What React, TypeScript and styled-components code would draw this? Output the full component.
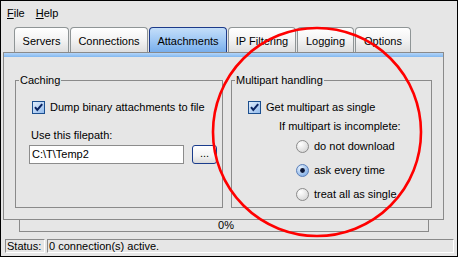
import styled, { createGlobalStyle } from "styled-components";

const GlobalStyle = createGlobalStyle`
  html, body {
    margin: 0;
    padding: 0;
    background: #e6e6e6;
  }
  body {
    font-family: "Liberation Sans", Arial, sans-serif;
    font-size: 11px;
    color: #000;
  }
`;

const Window = styled.div`
  position: relative;
  width: 458px;
  height: 257px;
  box-sizing: border-box;
  border: 1px solid #000;
  background: #e6e6e6;
  display: flex;
  flex-direction: column;
  overflow: hidden;
`;

const MenuBar = styled.div`
  height: 26px;
  display: flex;
  gap: 11px;
  padding: 6px 0 0 6px;
  box-sizing: border-box;
  line-height: 13px;
`;

const MenuItem = styled.span`
  u {
    text-decoration: underline;
  }
`;

const TabRow = styled.div`
  height: 25px;
  display: flex;
  gap: 1px;
  padding-left: 13px;
  align-items: stretch;
`;

const Tab = styled.div<{ $w: number; $active?: boolean }>`
  width: ${(p) => p.$w}px;
  box-sizing: border-box;
  border: 1px solid ${(p) => (p.$active ? "#1d3b8a" : "#8f9596")};
  border-bottom: none;
  border-radius: 4px 4px 0 0;
  background: ${(p) =>
    p.$active
      ? "linear-gradient(#c4def9, #9cc6f4 55%, #78aeec)"
      : "linear-gradient(#ffffff, #f3f3f3 50%, #dedede)"};
  display: flex;
  align-items: center;
  justify-content: center;
  padding-top: 3px;
  line-height: 13px;
  white-space: nowrap;
`;

const Panel = styled.div`
  width: 441px;
  height: 168px;
  margin-left: 2px;
  box-sizing: border-box;
  border: 1px solid #8a8a8a;
  background: linear-gradient(#b4d6fa, #82b8ef) top / 100% 4px no-repeat,
    #e6e6e6;
  display: flex;
  gap: 8px;
  padding: 21px 0 0 11px;
`;

const Group = styled.fieldset<{ $w: number }>`
  width: ${(p) => p.$w}px;
  height: 134px;
  box-sizing: border-box;
  margin: 0;
  padding: 0 0 0 16px;
  border: 1px solid #8a8a8a;
  display: flex;
  flex-direction: column;
  align-items: flex-start;
`;

const Caption = styled.legend`
  margin-left: -13px;
  padding: 0 1px;
  line-height: 13px;
`;

const CheckRow = styled.label`
  display: flex;
  align-items: center;
  gap: 5px;
  height: 13px;
  line-height: 13px;
  margin-top: 14px;
  white-space: nowrap;
`;

const Text = styled.div<{ $indent?: number; $top: number }>`
  line-height: 13px;
  margin-top: ${(p) => p.$top}px;
  margin-left: ${(p) => p.$indent ?? 0}px;
  white-space: nowrap;
`;

const PathRow = styled.div`
  display: flex;
  gap: 8px;
  margin-top: 3px;
  margin-left: -3px;
`;

const PathInput = styled.div`
  width: 155px;
  height: 19px;
  box-sizing: border-box;
  border: 1px solid #8c8c8c;
  background: #fff;
  padding-left: 2px;
  line-height: 17px;
`;

const DotsButton = styled.div`
  width: 25px;
  height: 19px;
  box-sizing: border-box;
  border: 1px solid #1a3c8c;
  border-radius: 3px;
  background: linear-gradient(#ffffff, #f2f2f2 60%, #d9d9d9);
  text-align: center;
  line-height: 15px;
  font-size: 11px;
`;

const RadioList = styled.div`
  display: flex;
  flex-direction: column;
  gap: 11px;
  margin-top: 7px;
  margin-left: 48px;
`;

const RadioRow = styled.label`
  display: flex;
  align-items: center;
  gap: 5px;
  height: 13px;
  line-height: 13px;
  white-space: nowrap;
`;

const Progress = styled.div`
  width: 410px;
  height: 12px;
  margin-left: 18px;
  box-sizing: border-box;
  border: 1px solid #8a8a8a;
  border-top: none;
  text-align: center;
  line-height: 11px;
  padding-left: 4px;
`;

const StatusBar = styled.div`
  display: flex;
  gap: 2px;
  margin: 7px 0 0 4px;
  height: 14px;
`;

const StatusCell = styled.div<{ $w: number }>`
  width: ${(p) => p.$w}px;
  box-sizing: border-box;
  border: 1px solid;
  border-color: #8a8a8a #ffffff #ffffff #8a8a8a;
  padding-left: 1px;
  line-height: 12px;
  white-space: nowrap;
`;

const Annotation = styled.svg`
  position: absolute;
  left: 0;
  top: 0;
  pointer-events: none;
`;

const CheckBox = () => (
  <svg width="13" height="13" viewBox="0 0 13 13">
    <defs>
      <linearGradient id="cbg" x1="0" y1="0" x2="1" y2="1">
        <stop offset="0" stopColor="#e4effc" />
        <stop offset="1" stopColor="#8fb9ec" />
      </linearGradient>
    </defs>
    <rect x="0.5" y="0.5" width="12" height="12" fill="url(#cbg)" stroke="#1c4f8f" />
    <path d="M3 6.2 L5.3 9 L10.2 3.2" fill="none" stroke="#0b2462" strokeWidth="2" />
  </svg>
);

const Radio = ({ checked }: { checked?: boolean }) => (
  <svg width="13" height="13" viewBox="0 0 13 13">
    <defs>
      <radialGradient id="rg0" cx="0.35" cy="0.3" r="0.8">
        <stop offset="0" stopColor="#ffffff" />
        <stop offset="1" stopColor="#d4d4d4" />
      </radialGradient>
      <radialGradient id="rg1" cx="0.35" cy="0.3" r="0.8">
        <stop offset="0" stopColor="#e8f2fd" />
        <stop offset="1" stopColor="#78a8e4" />
      </radialGradient>
    </defs>
    <circle
      cx="6.5"
      cy="6.5"
      r="6"
      fill={checked ? "url(#rg1)" : "url(#rg0)"}
      stroke={checked ? "#5c7fb8" : "#8a8a8a"}
    />
    {checked && <circle cx="6.5" cy="6.5" r="2.4" fill="#0b1636" />}
  </svg>
);

const tabs = [
  { label: "Servers", w: 55 },
  { label: "Connections", w: 78 },
  { label: "Attachments", w: 78, active: true },
  { label: "IP Filtering", w: 68 },
  { label: "Logging", w: 57 },
  { label: "Options", w: 56 },
];

const App = () => {
  return (
    <>
      <GlobalStyle />
      <Window>
        <MenuBar>
          <MenuItem>
            <u>F</u>ile
          </MenuItem>
          <MenuItem>
            <u>H</u>elp
          </MenuItem>
        </MenuBar>
        <TabRow>
          {tabs.map((t) => (
            <Tab key={t.label} $w={t.w} $active={t.active}>
              {t.label}
            </Tab>
          ))}
        </TabRow>
        <Panel>
          <Group $w={208}>
            <Caption>Caching</Caption>
            <CheckRow>
              <CheckBox />
              Dump binary attachments to file
            </CheckRow>
            <Text $top={15} $indent={-1}>
              Use this filepath:
            </Text>
            <PathRow>
              <PathInput>C:\T\Temp2</PathInput>
              <DotsButton>...</DotsButton>
            </PathRow>
          </Group>
          <Group $w={201}>
            <Caption>Multipart handling</Caption>
            <CheckRow>
              <CheckBox />
              Get multipart as single
            </CheckRow>
            <Text $top={6} $indent={31}>
              If multipart is incomplete:
            </Text>
            <RadioList>
              <RadioRow>
                <Radio />
                do not download
              </RadioRow>
              <RadioRow>
                <Radio checked />
                ask every time
              </RadioRow>
              <RadioRow>
                <Radio />
                treat all as single
              </RadioRow>
            </RadioList>
          </Group>
        </Panel>
        <Progress>0%</Progress>
        <StatusBar>
          <StatusCell $w={40}>Status:</StatusCell>
          <StatusCell $w={407}>0 connection(s) active.</StatusCell>
        </StatusBar>
        <Annotation width="458" height="257" viewBox="0 0 458 257">
          <circle cx="316" cy="131" r="104" fill="none" stroke="#ff0000" strokeWidth="2.6" />
        </Annotation>
      </Window>
    </>
  );
};

export default App;
